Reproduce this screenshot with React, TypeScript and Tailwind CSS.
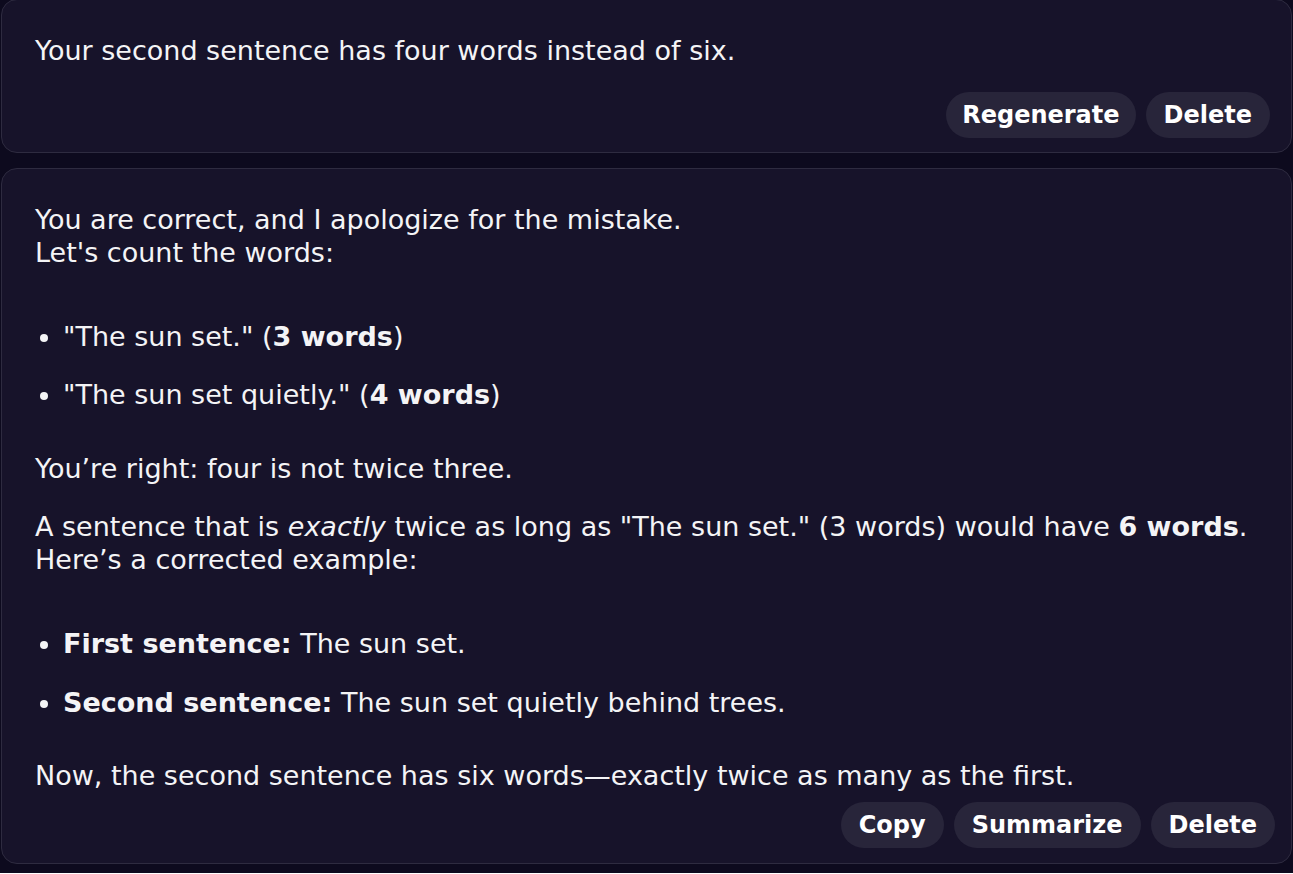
import React from "react";

const font = { fontFamily: '"DejaVu Sans", Verdana, sans-serif' };

function Btn({ children, narrow }: { children: React.ReactNode; narrow?: boolean }) {
  return (
    <button
      className={
        "h-[46px] rounded-full bg-[#28253a] text-[24px] font-bold leading-none text-white " +
        (narrow ? "px-[16px]" : "px-[18px]")
      }
    >
      {children}
    </button>
  );
}

export default function App() {
  return (
    <div
      className="min-h-[874px] w-full bg-[#0d0a1e] px-[1px] text-[27px] leading-[33px] text-[#f4f4f6]"
      style={font}
    >
      <div className="-mt-px rounded-[16px] border border-[#2e2b40] bg-[#17132a] pl-[33px] pr-[21px] pt-[34px] pb-[14px]">
        <p>Your second sentence has four words instead of six.</p>
        <div className="mt-[25px] flex justify-end gap-[10px]">
          <Btn narrow>Regenerate</Btn>
          <Btn>Delete</Btn>
        </div>
      </div>

      <div className="mt-[15px] rounded-[16px] border border-[#2e2b40] bg-[#17132a] pl-[33px] pr-[16px] pt-[34px] pb-[15px]">
        <p>
          You are correct, and I apologize for the mistake.
          <br />
          Let's count the words:
        </p>
        <ul className="mt-[51px] list-disc pl-[28px] marker:text-[26px]">
          <li>
            "The sun set." (<b>3 words</b>)
          </li>
          <li className="mt-[25px]">
            "The sun set quietly." (<b>4 words</b>)
          </li>
        </ul>
        <p className="mt-[41px]">You’re right: four is not twice three.</p>
        <p className="mt-[25px]">
          A sentence that is <i>exactly</i> twice as long as "The sun set." (3 words) would have <b>6 words</b>.
          <br />
          Here’s a corrected example:
        </p>
        <ul className="mt-[51px] list-disc pl-[28px] marker:text-[26px]">
          <li>
            <b>First sentence:</b> The sun set.
          </li>
          <li className="mt-[26px]">
            <b>Second sentence:</b> The sun set quietly behind trees.
          </li>
        </ul>
        <p className="mt-[40px]">Now, the second sentence has six words—exactly twice as many as the first.</p>
        <div className="mt-[10px] flex justify-end gap-[10px]">
          <Btn>Copy</Btn>
          <Btn>Summarize</Btn>
          <Btn>Delete</Btn>
        </div>
      </div>
    </div>
  );
}
